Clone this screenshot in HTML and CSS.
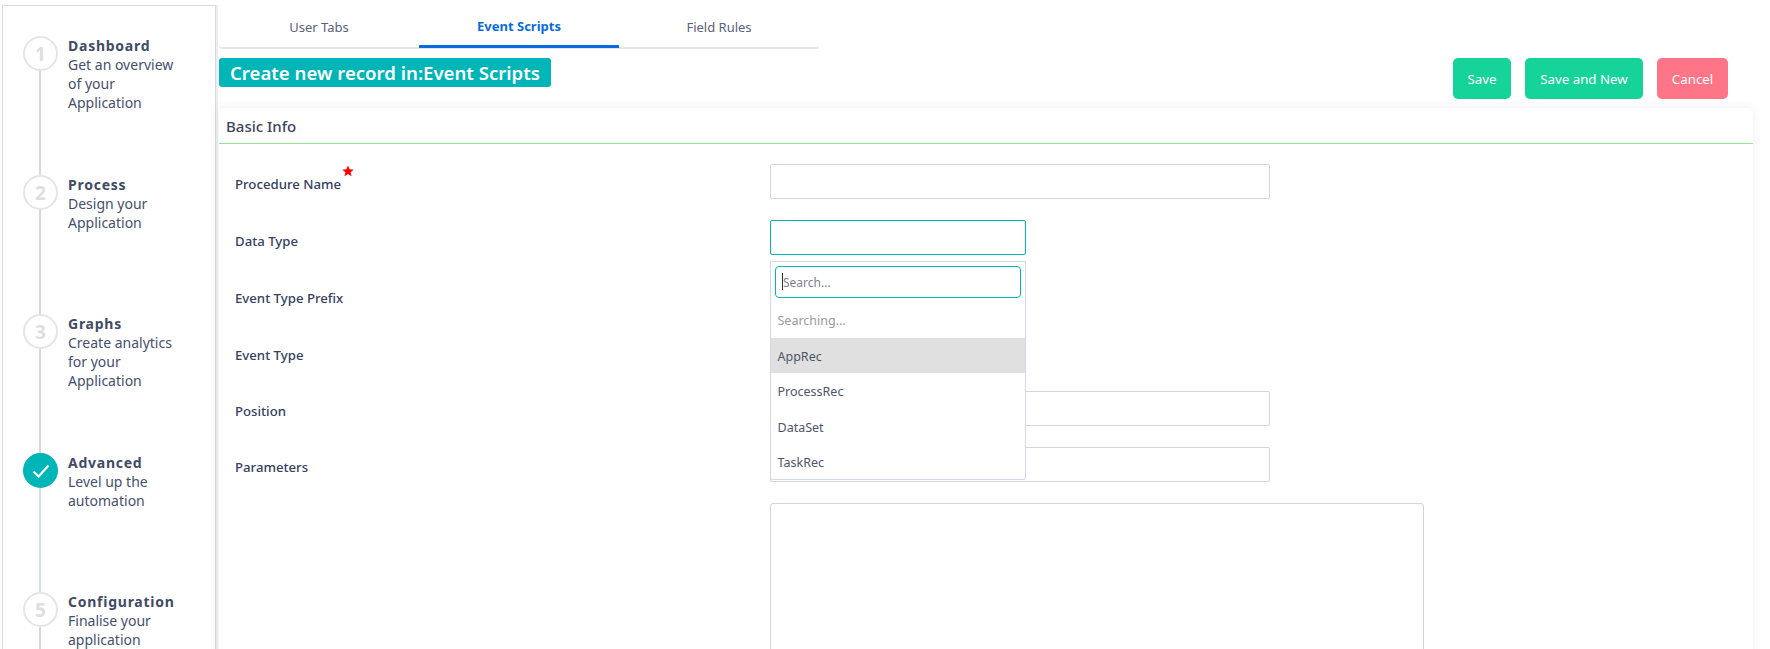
FILE: index.html
```html
<!DOCTYPE html>
<html lang="en">
<head>
<meta charset="utf-8">
<title>Create new record in Event Scripts</title>
<link rel="stylesheet" href="styles.css">
</head>
<body>
<div class="page">
  <aside class="sidebar">
    <ol class="steps">
      <li class="step">
        <span class="marker">1</span>
        <div class="step-text"><strong>Dashboard</strong><span>Get an overview<br>of your<br>Application</span></div>
      </li>
      <li class="step">
        <span class="marker">2</span>
        <div class="step-text"><strong>Process</strong><span>Design your<br>Application</span></div>
      </li>
      <li class="step">
        <span class="marker">3</span>
        <div class="step-text"><strong>Graphs</strong><span>Create analytics<br>for your<br>Application</span></div>
      </li>
      <li class="step step-done">
        <span class="marker"><svg width="20" height="16" viewBox="0 0 20 16" aria-hidden="true"><path d="M2.5 8.5 L7.6 13.5 L17.5 2.5" fill="none" stroke="#fff" stroke-width="2.2"/></svg></span>
        <div class="step-text"><strong>Advanced</strong><span>Level up the<br>automation</span></div>
      </li>
      <li class="step">
        <span class="marker">5</span>
        <div class="step-text"><strong>Configuration</strong><span>Finalise your<br>application</span></div>
      </li>
    </ol>
  </aside>
  <main class="main">
    <nav class="tabs">
      <a class="tab">User Tabs</a>
      <a class="tab tab-active">Event Scripts</a>
      <a class="tab">Field Rules</a>
    </nav>
    <header class="head">
      <h1 class="title">Create new record in:Event Scripts</h1>
      <div class="actions">
        <button class="btn btn-ok btn-save">Save</button>
        <button class="btn btn-ok btn-new">Save and New</button>
        <button class="btn btn-cancel">Cancel</button>
      </div>
    </header>
    <section class="card">
      <h2 class="card-title">Basic Info</h2>
      <form class="form">
        <div class="row">
          <label class="label">Procedure Name<svg class="star" width="12" height="12" viewBox="0 0 24 24" aria-hidden="true"><path d="M12 1l3.2 7.6 8.2.7-6.2 5.4 1.9 8L12 18l-7.100 4.700 1.900-8L.600 9.300l8.200-.7z" fill="#f00"/></svg></label>
          <input class="input" type="text">
        </div>
        <div class="row row-select">
          <label class="label">Data Type</label>
          <div class="select-wrap">
            <input class="input input-short input-focus" type="text">
            <div class="dropdown">
              <div class="search-box">
                <input class="search" type="text" placeholder="Search...">
                <i class="caret"></i>
              </div>
              <div class="option option-muted">Searching...</div>
              <div class="option option-active">AppRec</div>
              <div class="option">ProcessRec</div>
              <div class="option">DataSet</div>
              <div class="option">TaskRec</div>
            </div>
          </div>
        </div>
        <div class="row row-select">
          <label class="label">Event Type Prefix</label>
          <input class="input input-short" type="text">
        </div>
        <div class="row row-select">
          <label class="label">Event Type</label>
          <input class="input input-short" type="text">
        </div>
        <div class="row">
          <label class="label">Position</label>
          <input class="input" type="text">
        </div>
        <div class="row">
          <label class="label">Parameters</label>
          <input class="input" type="text">
        </div>
        <div class="row">
          <span class="label"></span>
          <textarea class="textarea"></textarea>
        </div>
      </form>
    </section>
  </main>
</div>
</body>
</html>
```

FILE: styles.css
```css
* { box-sizing: border-box; }
html, body { margin: 0; height: 649px; overflow: hidden; background: #fff; }
body { font-family: "Noto Sans", "Open Sans", sans-serif; font-size: 13px; color: #3b4781; }
.page { display: flex; align-items: flex-start; height: 649px; overflow: hidden; padding-left: 2px; }

.sidebar { flex: none; width: 214px; height: 700px; margin-top: 5px; border: 1px solid #d9d9d9; box-shadow: 2px 0 0 #eceef3; }
.steps { list-style: none; margin: 0; padding: 30px 0 0 20px; }
.step { display: flex; gap: 10px; height: 139px; position: relative; }
.step::before { content: ""; position: absolute; left: 16px; top: 35px; width: 2px; height: 104px; background: #d8d8d8; }
.step-done::before { background: #d5dbe8; }
.marker { flex: none; width: 35px; height: 35px; border-radius: 50%; border: 2px solid #e5e5e5; display: flex; align-items: center; justify-content: center; font-size: 19px; font-weight: 700; color: #dedede; background: #fff; }
.step-done .marker { background: #00b5b8; border-color: #00b5b8; }
.step-text { display: flex; flex-direction: column; font-size: 14px; line-height: 19px; color: #464f70; }
.step-text strong { font-size: 14px; font-weight: 700; letter-spacing: .75px; color: #414a66; }

.main { flex: none; width: 1552px; margin-left: 2px; }
.tabs { display: flex; width: 600px; height: 49px; margin-left: 1px; border-bottom: 2px solid #e3e4e8; border-radius: 0 0 3px 3px; }
.tab { width: 200px; height: 48px; flex: none; display: flex; align-items: center; justify-content: center; font-size: 13px; color: #5a6178; padding-top: 6px; }
.tab-active { font-weight: 700; color: #0a6be0; border-bottom: 3px solid #0a6be0; padding-top: 7px; }

.head { display: flex; justify-content: space-between; align-items: flex-start; margin: 9px 42px 0 1px; height: 50px; }
.title { margin: 0; height: 29px; padding: 0 11px; font-size: 18.600px; line-height: 29px; font-weight: 600; color: #fff; background: #00b5b8; border-radius: 3px; white-space: nowrap; }
.actions { display: flex; gap: 14px; }
.btn { height: 41px; border: 0; border-radius: 5px; color: #fff; font: 13.300px "Noto Sans", "Open Sans", sans-serif; padding: 0; }
.btn-ok { background: #16d39a; }
.btn-save { width: 58px; }
.btn-new { width: 118px; }
.btn-cancel { width: 71px; background: #ff7588; }

.card { margin-left: 1px; width: 1534px; height: 560px; border-radius: 5px; background: #fff; box-shadow: 0 0 10px rgba(70, 80, 140, .1); }
.card-title { margin: 0; height: 36px; padding: 0 0 0 7px; font-size: 15px; line-height: 36px; font-weight: 500; color: #3c4460; border-bottom: 1px solid #97e39a; }
.form { padding: 20px 0 0 16px; }
.row { display: flex; height: 56px; }
.row-select { height: 57px; }
.label { flex: none; width: 535px; padding-top: 10.500px; font-size: 13.200px; line-height: 18px; font-weight: 500; color: #33415f; position: relative; }
.row-select .label { padding-top: 11.500px; }
.star { position: absolute; margin: -10px 0 0 1px; }
.input { display: block; width: 500px; height: 35px; border: 1px solid #d0d5e4; border-radius: 2px; background: #fff; outline: none; }
.input-short { width: 256px; }
.input-focus { border-color: #00b5b8; }
.select-wrap { position: relative; }
.dropdown { position: absolute; left: 0; top: 41px; z-index: 2; width: 256px; height: 219px; background: #fff; border: 1px solid #d4d8e6; border-radius: 0 0 3px 3px; }
.search-box { position: relative; padding: 4px 4px 0; height: 36px; }
.search { display: block; width: 100%; height: 32px; padding: 0 6px 0 7px; border: 1px solid #00b5b8; border-radius: 4px; outline: none; font: 12px "Noto Sans", "Open Sans", sans-serif; }
.search::placeholder { color: #7d8290; opacity: 1; }
.caret { position: absolute; left: 11px; top: 11px; width: 1px; height: 17px; background: #333; }
.option { height: 35.500px; padding-left: 6.500px; font-size: 12.500px; line-height: 37px; color: #4e5468; }
.option-muted { height: 40px; padding-top: 4px; color: #9a9a9a; }
.option-active { height: 35px; background: #e0e0e0; }
.textarea { display: block; width: 654px; height: 300px; border: 1px solid #d0d5e4; border-radius: 3px; outline: none; resize: none; background: #fff; }
```
